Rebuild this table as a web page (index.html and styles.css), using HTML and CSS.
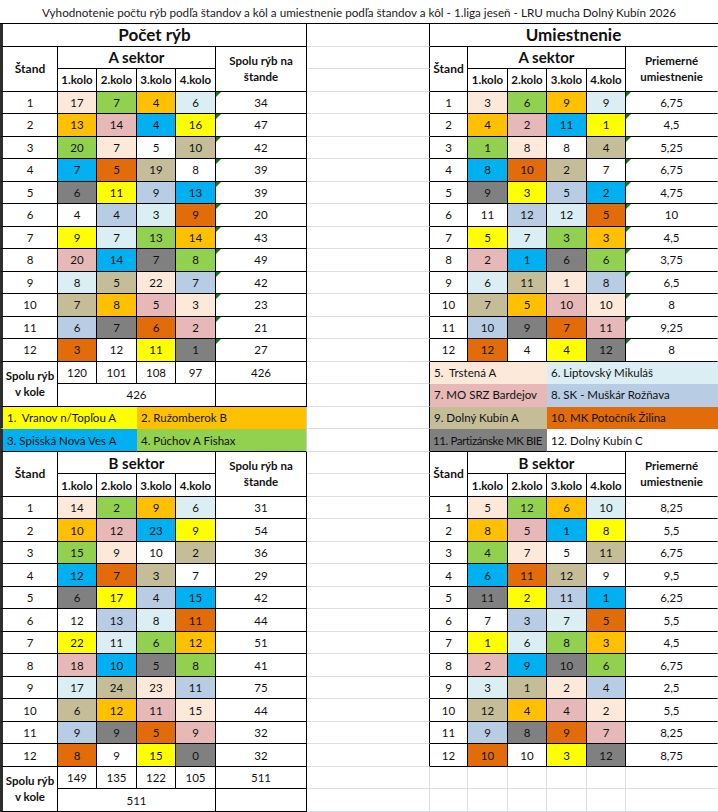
FILE: index.html
```html
<!DOCTYPE html>
<html lang="sk">
<head>
<meta charset="utf-8">
<title>Vyhodnotenie</title>
<link rel="stylesheet" href="styles.css">
</head>
<body>
<div class="sheet">
  <div class="c title">Vyhodnotenie počtu rýb podľa štandov a kôl a umiestnenie podľa štandov a kôl - 1.liga jeseň - LRU mucha Dolný Kubín 2026</div>

  <!-- R1 -->
  <div class="c f s6 h1">Počet rýb</div>
  <div class="c gap"></div>
  <div class="c s6 h1 end">Umiestnenie</div>

  <!-- R2-R3 A header -->
  <div class="c f r2 hk hst">Štand</div>
  <div class="c s4 h2">A sektor</div>
  <div class="c r2 hs">Spolu rýb na<br>štande</div>
  <div class="c gap"></div>
  <div class="c r2 hk hst">Štand</div>
  <div class="c s4 h2">A sektor</div>
  <div class="c r2 hs end">Priemerné<br>umiestnenie</div>
  <div class="c hk">1.kolo</div><div class="c hk">2.kolo</div><div class="c hk">3.kolo</div><div class="c hk">4.kolo</div>
  <div class="c gap"></div>
  <div class="c hk">1.kolo</div><div class="c hk">2.kolo</div><div class="c hk">3.kolo</div><div class="c hk">4.kolo</div>

  <!-- A data -->
  <div class="c f">1</div><div class="c t5">17</div><div class="c t4">7</div><div class="c t2">4</div><div class="c t6">6</div><div class="c tri">34</div>
  <div class="c gap"></div>
  <div class="c">1</div><div class="c t5">3</div><div class="c t4">6</div><div class="c t2">9</div><div class="c t6">9</div><div class="c tri end">6,75</div>

  <div class="c f">2</div><div class="c t2">13</div><div class="c t7">14</div><div class="c t3">4</div><div class="c t1">16</div><div class="c tri">47</div>
  <div class="c gap"></div>
  <div class="c">2</div><div class="c t2">4</div><div class="c t7">2</div><div class="c t3">11</div><div class="c t1">1</div><div class="c tri end">4,5</div>

  <div class="c f">3</div><div class="c t4">20</div><div class="c t5">7</div><div class="c t12">5</div><div class="c t9">10</div><div class="c tri">42</div>
  <div class="c gap"></div>
  <div class="c">3</div><div class="c t4">1</div><div class="c t5">8</div><div class="c t12">8</div><div class="c t9">4</div><div class="c tri end">5,25</div>

  <div class="c f">4</div><div class="c t3">7</div><div class="c t10">5</div><div class="c t9">19</div><div class="c t12">8</div><div class="c tri">39</div>
  <div class="c gap"></div>
  <div class="c">4</div><div class="c t3">8</div><div class="c t10">10</div><div class="c t9">2</div><div class="c t12">7</div><div class="c tri end">6,75</div>

  <div class="c f">5</div><div class="c t11">6</div><div class="c t1">11</div><div class="c t8">9</div><div class="c t3">13</div><div class="c tri">39</div>
  <div class="c gap"></div>
  <div class="c">5</div><div class="c t11">9</div><div class="c t1">3</div><div class="c t8">5</div><div class="c t3">2</div><div class="c tri end">4,75</div>

  <div class="c f">6</div><div class="c t12">4</div><div class="c t8">4</div><div class="c t6">3</div><div class="c t10">9</div><div class="c tri">20</div>
  <div class="c gap"></div>
  <div class="c">6</div><div class="c t12">11</div><div class="c t8">12</div><div class="c t6">12</div><div class="c t10">5</div><div class="c tri end">10</div>

  <div class="c f">7</div><div class="c t1">9</div><div class="c t6">7</div><div class="c t4">13</div><div class="c t2">14</div><div class="c tri">43</div>
  <div class="c gap"></div>
  <div class="c">7</div><div class="c t1">5</div><div class="c t6">7</div><div class="c t4">3</div><div class="c t2">3</div><div class="c tri end">4,5</div>

  <div class="c f">8</div><div class="c t7">20</div><div class="c t3">14</div><div class="c t11">7</div><div class="c t4">8</div><div class="c tri">49</div>
  <div class="c gap"></div>
  <div class="c">8</div><div class="c t7">2</div><div class="c t3">1</div><div class="c t11">6</div><div class="c t4">6</div><div class="c tri end">3,75</div>

  <div class="c f">9</div><div class="c t6">8</div><div class="c t9">5</div><div class="c t5">22</div><div class="c t8">7</div><div class="c tri">42</div>
  <div class="c gap"></div>
  <div class="c">9</div><div class="c t6">6</div><div class="c t9">11</div><div class="c t5">1</div><div class="c t8">8</div><div class="c tri end">6,5</div>

  <div class="c f">10</div><div class="c t9">7</div><div class="c t2">8</div><div class="c t7">5</div><div class="c t5">3</div><div class="c tri">23</div>
  <div class="c gap"></div>
  <div class="c">10</div><div class="c t9">7</div><div class="c t2">5</div><div class="c t7">10</div><div class="c t5">10</div><div class="c tri end">8</div>

  <div class="c f">11</div><div class="c t8">6</div><div class="c t11">7</div><div class="c t10">6</div><div class="c t7">2</div><div class="c tri">21</div>
  <div class="c gap"></div>
  <div class="c">11</div><div class="c t8">10</div><div class="c t11">9</div><div class="c t10">7</div><div class="c t7">11</div><div class="c tri end">9,25</div>

  <div class="c f">12</div><div class="c t10">3</div><div class="c t12">12</div><div class="c t1">11</div><div class="c t11">1</div><div class="c tri">27</div>
  <div class="c gap"></div>
  <div class="c">12</div><div class="c t10">12</div><div class="c t12">4</div><div class="c t1">4</div><div class="c t11">12</div><div class="c tri end">8</div>

  <!-- A totals + right legend -->
  <div class="c f r2 hs">Spolu rýb<br>v kole</div>
  <div class="c">120</div><div class="c">101</div><div class="c">108</div><div class="c">97</div><div class="c">426</div>
  <div class="c gap"></div>
  <div class="c s3 lg t5">5.&nbsp; Trstená A</div>
  <div class="c s3 lg t6">6. Liptovský Mikuláš</div>

  <div class="c s4">426</div><div class="c"></div>
  <div class="c gap"></div>
  <div class="c s3 lg t7">7. MO SRZ Bardejov</div>
  <div class="c s3 lg t8">8. SK - Muškár Rožňava</div>

  <div class="c f s3 lg t1">1.&nbsp; Vranov n/Topľou A</div>
  <div class="c s3 lg t2 lgr">2. Ružomberok B</div>
  <div class="c gap"></div>
  <div class="c s3 lg t9">9. Dolný Kubín A</div>
  <div class="c s3 lg t10">10. MK Potočník Žilina</div>

  <div class="c f s3 lg lgb t3">3. Spišská Nová Ves A</div>
  <div class="c s3 lg lgb t4 lgr">4. Púchov A Fishax</div>
  <div class="c gap"></div>
  <div class="c s3 lg lgb t11 tight">11. Partizánske MK BIE</div>
  <div class="c s3 lg lgb t12">12. Dolný Kubín C</div>

  <!-- B header -->
  <div class="c f r2 hk hst">Štand</div>
  <div class="c s4 h2">B sektor</div>
  <div class="c r2 hs">Spolu rýb na<br>štande</div>
  <div class="c gap"></div>
  <div class="c r2 hk hst">Štand</div>
  <div class="c s4 h2">B sektor</div>
  <div class="c r2 hs end">Priemerné<br>umiestnenie</div>
  <div class="c hk">1.kolo</div><div class="c hk">2.kolo</div><div class="c hk">3.kolo</div><div class="c hk">4.kolo</div>
  <div class="c gap"></div>
  <div class="c hk">1.kolo</div><div class="c hk">2.kolo</div><div class="c hk">3.kolo</div><div class="c hk">4.kolo</div>

  <!-- B data -->
  <div class="c f">1</div><div class="c t5">14</div><div class="c t4">2</div><div class="c t2">9</div><div class="c t6">6</div><div class="c">31</div>
  <div class="c gap"></div>
  <div class="c">1</div><div class="c t5">5</div><div class="c t4">12</div><div class="c t2">6</div><div class="c t6">10</div><div class="c end">8,25</div>

  <div class="c f">2</div><div class="c t2">10</div><div class="c t7">12</div><div class="c t3">23</div><div class="c t1">9</div><div class="c">54</div>
  <div class="c gap"></div>
  <div class="c">2</div><div class="c t2">8</div><div class="c t7">5</div><div class="c t3">1</div><div class="c t1">8</div><div class="c end">5,5</div>

  <div class="c f">3</div><div class="c t4">15</div><div class="c t5">9</div><div class="c t12">10</div><div class="c t9">2</div><div class="c">36</div>
  <div class="c gap"></div>
  <div class="c">3</div><div class="c t4">4</div><div class="c t5">7</div><div class="c t12">5</div><div class="c t9">11</div><div class="c end">6,75</div>

  <div class="c f">4</div><div class="c t3">12</div><div class="c t10">7</div><div class="c t9">3</div><div class="c t12">7</div><div class="c">29</div>
  <div class="c gap"></div>
  <div class="c">4</div><div class="c t3">6</div><div class="c t10">11</div><div class="c t9">12</div><div class="c t12">9</div><div class="c end">9,5</div>

  <div class="c f">5</div><div class="c t11">6</div><div class="c t1">17</div><div class="c t8">4</div><div class="c t3">15</div><div class="c">42</div>
  <div class="c gap"></div>
  <div class="c">5</div><div class="c t11">11</div><div class="c t1">2</div><div class="c t8">11</div><div class="c t3">1</div><div class="c end">6,25</div>

  <div class="c f">6</div><div class="c t12">12</div><div class="c t8">13</div><div class="c t6">8</div><div class="c t10">11</div><div class="c">44</div>
  <div class="c gap"></div>
  <div class="c">6</div><div class="c t12">7</div><div class="c t8">3</div><div class="c t6">7</div><div class="c t10">5</div><div class="c end">5,5</div>

  <div class="c f">7</div><div class="c t1">22</div><div class="c t6">11</div><div class="c t4">6</div><div class="c t2">12</div><div class="c">51</div>
  <div class="c gap"></div>
  <div class="c">7</div><div class="c t1">1</div><div class="c t6">6</div><div class="c t4">8</div><div class="c t2">3</div><div class="c end">4,5</div>

  <div class="c f">8</div><div class="c t7">18</div><div class="c t3">10</div><div class="c t11">5</div><div class="c t4">8</div><div class="c">41</div>
  <div class="c gap"></div>
  <div class="c">8</div><div class="c t7">2</div><div class="c t3">9</div><div class="c t11">10</div><div class="c t4">6</div><div class="c end">6,75</div>

  <div class="c f">9</div><div class="c t6">17</div><div class="c t9">24</div><div class="c t5">23</div><div class="c t8">11</div><div class="c">75</div>
  <div class="c gap"></div>
  <div class="c">9</div><div class="c t6">3</div><div class="c t9">1</div><div class="c t5">2</div><div class="c t8">4</div><div class="c end">2,5</div>

  <div class="c f">10</div><div class="c t9">6</div><div class="c t2">12</div><div class="c t7">11</div><div class="c t5">15</div><div class="c">44</div>
  <div class="c gap"></div>
  <div class="c">10</div><div class="c t9">12</div><div class="c t2">4</div><div class="c t7">4</div><div class="c t5">2</div><div class="c end">5,5</div>

  <div class="c f">11</div><div class="c t8">9</div><div class="c t11">9</div><div class="c t10">5</div><div class="c t7">9</div><div class="c">32</div>
  <div class="c gap"></div>
  <div class="c">11</div><div class="c t8">9</div><div class="c t11">8</div><div class="c t10">9</div><div class="c t7">7</div><div class="c end">8,25</div>

  <div class="c f">12</div><div class="c t10">8</div><div class="c t12">9</div><div class="c t1">15</div><div class="c t11">0</div><div class="c">32</div>
  <div class="c gap"></div>
  <div class="c">12</div><div class="c t10">10</div><div class="c t12">10</div><div class="c t1">3</div><div class="c t11">12</div><div class="c end">8,75</div>

  <!-- B totals -->
  <div class="c f r2 hs">Spolu rýb<br>v kole</div>
  <div class="c">149</div><div class="c">135</div><div class="c">122</div><div class="c">105</div><div class="c">511</div>
  <div class="c gap blank"></div>
  <div class="c blank"></div><div class="c blank"></div><div class="c blank"></div><div class="c blank"></div><div class="c blank"></div><div class="c blank end"></div>

  <div class="c s4">511</div><div class="c"></div>
  <div class="c gap blank"></div>
  <div class="c blank"></div><div class="c blank"></div><div class="c blank"></div><div class="c blank"></div><div class="c blank"></div><div class="c blank end"></div>
</div>
</body>
</html>
```

FILE: styles.css
```css
html, body {
  margin: 0;
  padding: 0;
  background: #ffffff;
}

body {
  font-family: Lato, "Liberation Sans", sans-serif;
  font-size: 11.5px;
  color: #111;
}

.sheet {
  display: grid;
  grid-template-columns: 58px 39px 40px 39px 40px 91px 123px 38px 40px 39px 40px 39px 92px;
  grid-template-rows: 24px repeat(35, 1fr);
  width: 718px;
  height: 812px;
}

.c {
  box-sizing: border-box;
  border-right: 1px solid #000;
  border-bottom: 1px solid #000;
  display: flex;
  align-items: center;
  justify-content: center;
  white-space: nowrap;
  overflow: hidden;
  position: relative;
  text-align: center;
}

.title {
  grid-column: span 13;
  border-right: none;
  font-size: 11.7px;
  color: #1a1a1a;
}

.f { border-left: 3px solid #2e2e2e; }

.s3 { grid-column: span 3; }
.s4 { grid-column: span 4; }
.s6 { grid-column: span 6; }
.r2 { grid-row: span 2; }

.h1 { font-weight: 700; font-size: 17px; }
.h2 { font-weight: 700; font-size: 15px; }
.hk { font-weight: 700; font-size: 11.5px; }
.hst { font-size: 12px; }
.hs { font-weight: 700; font-size: 11.5px; line-height: 16px; white-space: normal; }

.gap { border-bottom-color: #dadee5; }
.blank { border-right-color: #dadee5; border-bottom-color: #dadee5; }
.end { border-right-color: transparent; }

.lg {
  justify-content: flex-start;
  padding-left: 4px;
  border-right-color: transparent;
  border-bottom-color: transparent;
  font-size: 11.5px;
}
.lgr { border-right-color: #c9ccd1; }
.lgb { border-bottom-color: #000; }
.tight { letter-spacing: -0.4px; padding-left: 3px; }

.tri::before {
  content: "";
  position: absolute;
  left: 0;
  top: 0;
  border-top: 5px solid #157a15;
  border-right: 5px solid transparent;
}

.t1 { background: #ffff00; }
.t2 { background: #ffc000; }
.t3 { background: #00b0f0; }
.t4 { background: #92d050; }
.t5 { background: #fde9d9; }
.t6 { background: #daeef3; }
.t7 { background: #e6b8b7; }
.t8 { background: #b8cce4; }
.t9 { background: #c4bd97; }
.t10 { background: #e26b0a; }
.t11 { background: #808080; }
.t12 { background: #ffffff; }
```
